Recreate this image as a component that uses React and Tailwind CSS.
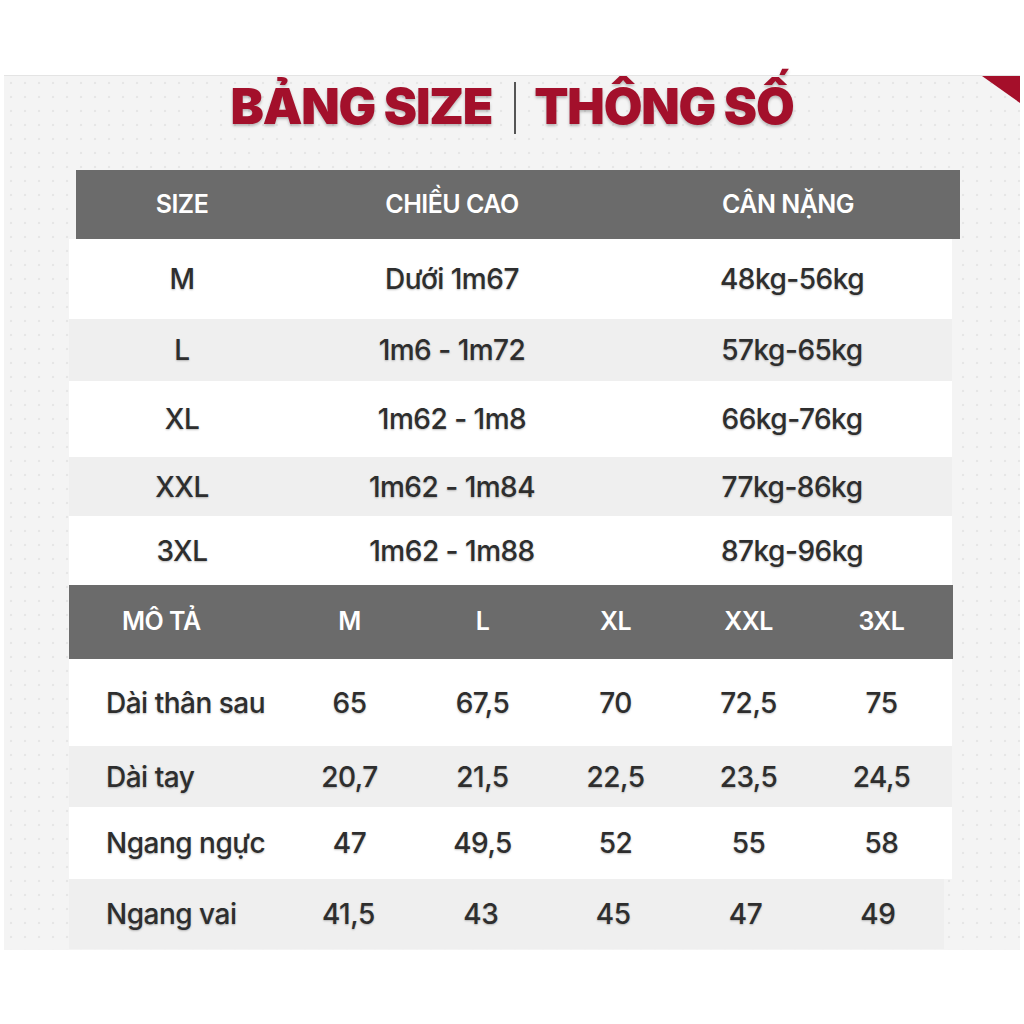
import React from 'react'

const sizes = [
  { size: 'M', height: 'Dưới 1m67', weight: '48kg-56kg', h: 'h-[80px]', bg: 'bg-white' },
  { size: 'L', height: '1m6 - 1m72', weight: '57kg-65kg', h: 'h-[62px]', bg: 'bg-[#efefef]' },
  { size: 'XL', height: '1m62 - 1m8', weight: '66kg-76kg', h: 'h-[76px]', bg: 'bg-white' },
  { size: 'XXL', height: '1m62 - 1m84', weight: '77kg-86kg', h: 'h-[59px]', bg: 'bg-[#efefef]' },
  { size: '3XL', height: '1m62 - 1m88', weight: '87kg-96kg', h: 'h-[69px]', bg: 'bg-white' },
]

const measures = [
  { label: 'Dài thân sau', values: ['65', '67,5', '70', '72,5', '75'], h: 'h-[87px]', bg: 'bg-white', w: 'w-[883px]' },
  { label: 'Dài tay', values: ['20,7', '21,5', '22,5', '23,5', '24,5'], h: 'h-[61px]', bg: 'bg-[#efefef]', w: 'w-[883px]' },
  { label: 'Ngang ngực', values: ['47', '49,5', '52', '55', '58'], h: 'h-[72px]', bg: 'bg-white', w: 'w-[883px]' },
  { label: 'Ngang vai', values: ['41,5', '43', '45', '47', '49'], h: 'h-[70px]', bg: 'bg-[#efefef]', w: 'w-[875px]' },
]

const cols = ['M', 'L', 'XL', 'XXL', '3XL']

const soft = '[text-shadow:0_1px_2px_rgba(0,0,0,0.25)]'

export default function App() {
  return (
    <div className="w-[1024px] h-[1024px] bg-white font-[Inter,sans-serif] overflow-hidden">
      <div className="h-[75px]" />
      <div className="relative ml-[4px] w-[1016px] h-[875px] bg-[#f4f4f4] border-t border-[#e4e4e4] bg-[radial-gradient(circle,#e6e6e6_1px,transparent_1.6px)] bg-[length:14px_14px]">
        {/* corner mark */}
        <svg className="absolute right-0 top-0" width="38" height="27" viewBox="0 0 38 27">
          <polygon points="0,0 38,0 38,27" fill="#a50f2a" />
        </svg>

        {/* title */}
        <div className="h-[94px] flex justify-center items-start pt-[5px]">
          <div className="flex items-start text-[50px] leading-none font-black tracking-[-1.2px] text-[#a3102b] [text-shadow:0_2px_3px_rgba(0,0,0,0.25)]">
            <span>BẢNG SIZE</span>
            <span className="w-[2px] h-[52px] bg-[#555] mt-[1px] ml-[22px] mr-[18px]" />
            <span>THÔNG SỐ</span>
          </div>
        </div>

        {/* size table */}
        <div className="ml-[72px] w-[884px] h-[69px] bg-[#6b6b6b] flex items-center text-white text-[25px] font-semibold tracking-[-0.5px]">
          <div className="w-[212px] text-center">SIZE</div>
          <div className="w-[328px] text-center">CHIỀU CAO</div>
          <div className="w-[344px] text-center">CÂN NẶNG</div>
        </div>
        <div className="ml-[65px] w-[883px]">
          {sizes.map((r) => (
            <div key={r.size} className={`${r.h} ${r.bg} flex items-center text-[28px] font-medium text-[#2e2e2e] tracking-[-0.5px] ${soft}`}>
              <div className="w-[226px] text-center">{r.size}</div>
              <div className="w-[314px] text-center">{r.height}</div>
              <div className="w-[343px] pl-[23px] text-center">{r.weight}</div>
            </div>
          ))}
        </div>

        {/* measurement table */}
        <div className="ml-[65px] w-[884px] h-[74px] bg-[#6b6b6b] flex items-center text-white text-[25px] font-semibold tracking-[-0.5px]">
          <div className="w-[214px] pl-[53px]">MÔ TẢ</div>
          {cols.map((c) => (
            <div key={c} className="w-[133px] text-center">{c}</div>
          ))}
        </div>
        <div className="ml-[65px]">
          {measures.map((r) => (
            <div key={r.label} className={`${r.h} ${r.bg} ${r.w} flex items-center text-[28px] font-medium text-[#2e2e2e] tracking-[-0.5px] ${soft}`}>
              <div className="w-[214px] pl-[37px]">{r.label}</div>
              {r.values.map((v, i) => (
                <div key={i} className="w-[133px] text-center">{v}</div>
              ))}
            </div>
          ))}
        </div>
      </div>
    </div>
  )
}
